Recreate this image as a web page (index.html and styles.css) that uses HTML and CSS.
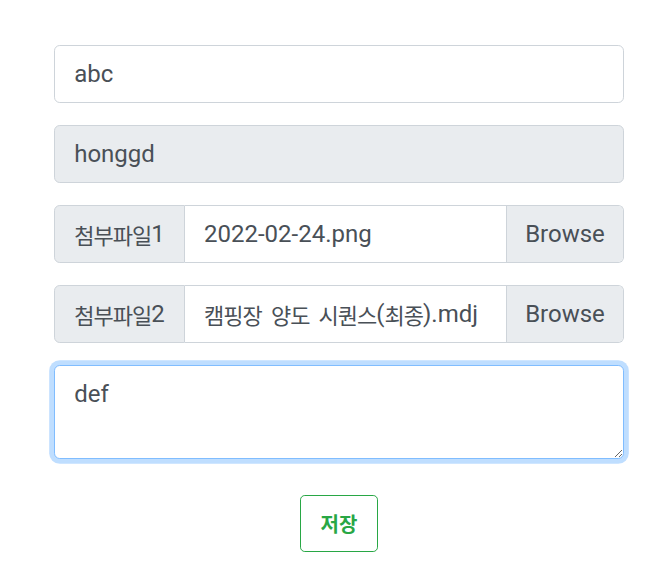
FILE: index.html
```html
<!DOCTYPE html>
<html lang="ko">
<head>
<meta charset="utf-8">
<title>form</title>
<link rel="stylesheet" href="styles.css">
</head>
<body>
<form class="form">
  <div class="group">
    <input class="control" type="text" value="abc">
  </div>
  <div class="group">
    <input class="control" type="text" value="honggd" readonly>
  </div>
  <div class="group input-group">
    <div class="prepend"><span class="ko">첨부파일</span>1</div>
    <div class="file">
      <span class="file-label">2022-02-24.png</span>
      <span class="browse">Browse</span>
    </div>
  </div>
  <div class="group input-group">
    <div class="prepend"><span class="ko">첨부파일</span>2</div>
    <div class="file">
      <span class="file-label"><span class="ko">캠핑장 양도 시퀀스</span>(<span class="ko">최종</span>).mdj</span>
      <span class="browse">Browse</span>
    </div>
  </div>
  <div class="group">
    <textarea class="control area" rows="2">def</textarea>
  </div>
  <div class="actions">
    <button class="btn-save" type="button">저장</button>
  </div>
</form>
</body>
</html>
```
FILE: styles.css
```css
* { box-sizing: border-box; }
html, body {
  margin: 0;
  padding: 0;
  background: #fff;
}
body {
  font-family: Roboto, "Noto Sans CJK KR", sans-serif;
  color: #495057;
}
.form {
  padding: 45px 39px 0 54px;
}
.group {
  margin-bottom: 22.4px;
}
.control {
  display: block;
  width: 100%;
  height: 57.6px;
  padding: 9.6px 19.2px;
  font-family: inherit;
  font-size: 24px;
  line-height: 36px;
  color: #495057;
  background: #fff;
  border: 1.2px solid #ced4da;
  border-radius: 5.76px;
  outline: none;
  margin: 0;
}
.control[readonly] {
  background: #e9ecef;
}
.area {
  height: 93.6px;
  border-color: #80bdff;
  box-shadow: 0 0 0 4.8px rgba(0, 123, 255, 0.25);
  resize: vertical;
}
.ko {
  font-family: "Noto Sans CJK KR", sans-serif;
  font-size: 22px;
  letter-spacing: -1px;
}
.input-group {
  display: flex;
  height: 57.6px;
}
.prepend {
  display: flex;
  align-items: center;
  padding: 0 19.2px;
  font-size: 24px;
  line-height: 36px;
  background: #e9ecef;
  border: 1.2px solid #ced4da;
  border-radius: 5.76px 0 0 5.76px;
  white-space: nowrap;
}
.file {
  flex: 1;
  display: flex;
  align-items: stretch;
  border: 1.2px solid #ced4da;
  border-left: 0;
  border-radius: 0 5.76px 5.76px 0;
  overflow: hidden;
  min-width: 0;
}
.file-label {
  flex: 1;
  display: flex;
  align-items: center;
  padding: 0 19.2px;
  font-size: 24px;
  white-space: pre;
  overflow: hidden;
  min-width: 0;
}
.file-label .ko {
  word-spacing: 4px;
}
.browse {
  display: flex;
  align-items: center;
  padding: 0 18.2px;
  font-size: 24px;
  background: #e9ecef;
  border-left: 1.2px solid #ced4da;
}
.actions {
  display: flex;
  justify-content: center;
  padding-top: 14px;
}
.btn-save {
  height: 57px;
  padding: 0 19.2px;
  font-family: "Noto Sans CJK KR", sans-serif;
  font-size: 20px;
  font-weight: 700;
  color: #28a745;
  background: #fff;
  border: 1.2px solid #28a745;
  border-radius: 4.8px;
  cursor: pointer;
}
```
